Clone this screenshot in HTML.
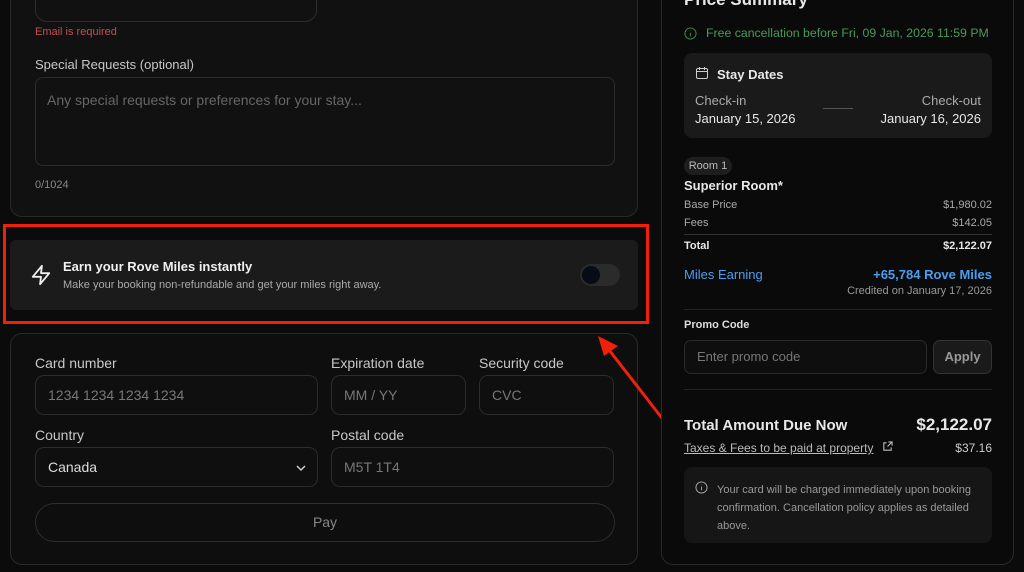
<!DOCTYPE html>
<html><head><meta charset="utf-8"><style>
*{box-sizing:border-box;margin:0;padding:0}
body{width:1024px;height:572px;background:#0b0b0b;font-family:"Liberation Sans",sans-serif;color:#e8e8e8;position:relative;overflow:hidden}
.a{position:absolute}
.panel{position:absolute;background:#111;border:1px solid #2a2a2a;border-radius:12px}
.inp{position:absolute;background:#0f0f0f;border:1px solid #2c2c2c;border-radius:9px;color:#777;font-size:14px;padding-left:12px;display:flex;align-items:center}
.lbl{position:absolute;font-size:13px;color:#c8c8c8}
.t11{font-size:11px}
</style></head><body>
<div class="panel" style="left:10px;top:-20px;width:628px;height:237px"></div>
<div class="inp" style="left:35px;top:-20px;width:282px;height:42px;background:#111;border-radius:12px"><span style="position:absolute;top:-10px;left:22px;font-size:13px;color:#666">Email Address</span></div>
<div class="a t11" style="left:35px;top:26px;color:#c0504d">Email is required</div>
<div class="lbl" style="left:35px;top:57px">Special Requests (optional)</div>
<div class="a" style="left:35px;top:77px;width:580px;height:89px;border:1px solid #2c2c2c;border-radius:8px;background:#111"></div>
<div class="a" style="left:47px;top:92px;font-size:14px;color:#666">Any special requests or preferences for your stay...</div>
<div class="a t11" style="left:35px;top:179px;color:#888">0/1024</div>

<div class="a" style="left:3px;top:224px;width:646px;height:100px;border:3px solid #f0200a"></div>
<div class="a" style="left:10px;top:240px;width:628px;height:70px;background:#1b1b1b;border-radius:6px"></div>
<svg class="a" style="left:30px;top:264px" width="22" height="22" viewBox="0 0 24 24" fill="none" stroke="#eee" stroke-width="2" stroke-linejoin="round"><path d="M13 2L3 14h9l-1 8 10-12h-9l1-8z"/></svg>
<div class="a" style="left:63px;top:259px;font-size:13px;font-weight:bold;color:#f0f0f0">Earn your Rove Miles instantly</div>
<div class="a t11" style="left:63px;top:279px;color:#aaa">Make your booking non-refundable and get your miles right away.</div>
<div class="a" style="left:580px;top:264px;width:40px;height:22px;border-radius:11px;background:#2b2b2b"></div>
<div class="a" style="left:582px;top:266px;width:18px;height:18px;border-radius:9px;background:#060b16"></div>

<div class="panel" style="left:10px;top:333px;width:628px;height:232px;background:#0e0e0e"></div>
<div class="lbl" style="left:35px;top:355px;font-size:14px">Card number</div>
<div class="lbl" style="left:331px;top:355px;font-size:14px">Expiration date</div>
<div class="lbl" style="left:479px;top:355px;font-size:14px">Security code</div>
<div class="inp" style="left:35px;top:375px;width:283px;height:40px">1234 1234 1234 1234</div>
<div class="inp" style="left:331px;top:375px;width:135px;height:40px">MM / YY</div>
<div class="inp" style="left:479px;top:375px;width:135px;height:40px">CVC</div>
<div class="lbl" style="left:35px;top:427px;font-size:14px">Country</div>
<div class="lbl" style="left:331px;top:427px;font-size:14px">Postal code</div>
<div class="inp" style="left:35px;top:447px;width:283px;height:40px;color:#ddd">Canada<svg class="a" style="right:10px;top:14px" width="12" height="12" viewBox="0 0 12 12"><path d="M2 4l4 4 4-4" stroke="#ccc" stroke-width="1.5" fill="none"/></svg></div>
<div class="inp" style="left:331px;top:447px;width:283px;height:40px">M5T 1T4</div>
<div class="a" style="left:35px;top:503px;width:580px;height:39px;border:1px solid #2e2e2e;border-radius:20px;color:#888;font-size:14px;text-align:center;line-height:37px">Pay</div>

<svg class="a" style="left:590px;top:330px" width="80" height="100"><line x1="75" y1="92" x2="16" y2="16" stroke="#f0200a" stroke-width="3"/><path d="M8 6L28 16L14 26Z" fill="#f0200a"/></svg>

<div class="panel" style="left:661px;top:-20px;width:353px;height:585px;background:#0a0a0a"></div>
<div class="a" style="left:684px;top:-10px;font-size:17px;font-weight:bold">Price Summary</div>
<svg class="a" style="left:684px;top:27px" width="13" height="13" viewBox="0 0 14 14"><circle cx="7" cy="7" r="6" stroke="#3f8a4f" fill="none"/><path d="M7 6v4M7 4v.5" stroke="#3f8a4f"/></svg>
<div class="a" style="left:706px;top:26px;font-size:12.3px;color:#4a9a5a">Free cancellation before Fri, 09 Jan, 2026 11:59 PM</div>
<div class="a" style="left:684px;top:53px;width:308px;height:85px;background:#1a1a1a;border-radius:8px"></div>
<svg class="a" style="left:695px;top:66px" width="14" height="14" viewBox="0 0 14 14" fill="none" stroke="#ccc"><rect x="1.5" y="2.5" width="11" height="10" rx="1.5"/><path d="M1.5 5.5h11M4.5 1v3M9.5 1v3"/></svg>
<div class="a" style="left:717px;top:67px;font-size:13px;font-weight:bold">Stay Dates</div>
<div class="a" style="left:695px;top:93px;font-size:13px;color:#aaa">Check-in</div>
<div class="a" style="left:695px;top:111px;font-size:13px">January 15, 2026</div>
<div class="a" style="left:823px;top:108px;width:30px;height:1px;background:#555"></div>
<div class="a" style="right:43px;top:93px;font-size:13px;color:#aaa">Check-out</div>
<div class="a" style="right:43px;top:111px;font-size:13px">January 16, 2026</div>
<div class="a" style="left:684px;top:157px;width:48px;height:18px;background:#1e1e1e;border-radius:9px;font-size:11px;color:#bbb;text-align:center;line-height:18px">Room 1</div>
<div class="a" style="left:684px;top:178px;font-size:13px;font-weight:bold">Superior Room*</div>
<div class="a t11" style="left:684px;top:199px;color:#aaa">Base Price</div>
<div class="a t11" style="right:32px;top:199px;color:#aaa">$1,980.02</div>
<div class="a t11" style="left:684px;top:217px;color:#aaa">Fees</div>
<div class="a t11" style="right:32px;top:217px;color:#aaa">$142.05</div>
<div class="a" style="left:684px;top:234px;width:308px;height:1px;background:#333"></div>
<div class="a t11" style="left:684px;top:240px;font-weight:bold">Total</div>
<div class="a t11" style="right:32px;top:240px;font-weight:bold">$2,122.07</div>
<div class="a" style="left:684px;top:267px;font-size:13px;color:#4a9ef0">Miles Earning</div>
<div class="a" style="right:32px;top:267px;font-size:13px;color:#4a9ef0;font-weight:bold">+65,784 Rove Miles</div>
<div class="a t11" style="right:32px;top:285px;color:#999">Credited on January 17, 2026</div>
<div class="a" style="left:684px;top:309px;width:308px;height:1px;background:#222"></div>
<div class="a t11" style="left:684px;top:319px;font-weight:bold;color:#ddd">Promo Code</div>
<div class="a" style="left:684px;top:340px;width:243px;height:34px;border:1px solid #2a2a2a;border-radius:7px;background:#0e0e0e;font-size:13px;color:#777;padding-left:12px;line-height:32px">Enter promo code</div>
<div class="a" style="left:933px;top:340px;width:59px;height:34px;border:1px solid #333;border-radius:7px;background:#1a1a1a;font-size:13px;color:#999;text-align:center;line-height:32px;font-weight:bold">Apply</div>
<div class="a" style="left:684px;top:389px;width:308px;height:1px;background:#222"></div>
<div class="a" style="left:684px;top:417px;font-size:15px;font-weight:bold">Total Amount Due Now</div>
<div class="a" style="right:32px;top:415px;font-size:17px;font-weight:bold">$2,122.07</div>
<div class="a" style="left:684px;top:441px;font-size:12px;color:#bbb;text-decoration:underline">Taxes &amp; Fees to be paid at property</div>
<svg class="a" style="left:882px;top:441px" width="11" height="11" viewBox="0 0 12 12" fill="none" stroke="#bbb" stroke-width="1.2"><path d="M5 2H2v8h8V7M7 1h4v4M11 1L6 6"/></svg>
<div class="a" style="right:32px;top:441px;font-size:12px;color:#ccc">$37.16</div>
<div class="a" style="left:684px;top:467px;width:308px;height:76px;background:#161616;border-radius:8px"></div>
<svg class="a" style="left:695px;top:481px" width="13" height="13" viewBox="0 0 14 14"><circle cx="7" cy="7" r="6" stroke="#aaa" fill="none"/><path d="M7 6v4M7 4v.5" stroke="#aaa"/></svg>
<div class="a t11" style="left:717px;top:481px;width:260px;line-height:18px;color:#999">Your card will be charged immediately upon booking confirmation. Cancellation policy applies as detailed above.</div>
</body></html>
